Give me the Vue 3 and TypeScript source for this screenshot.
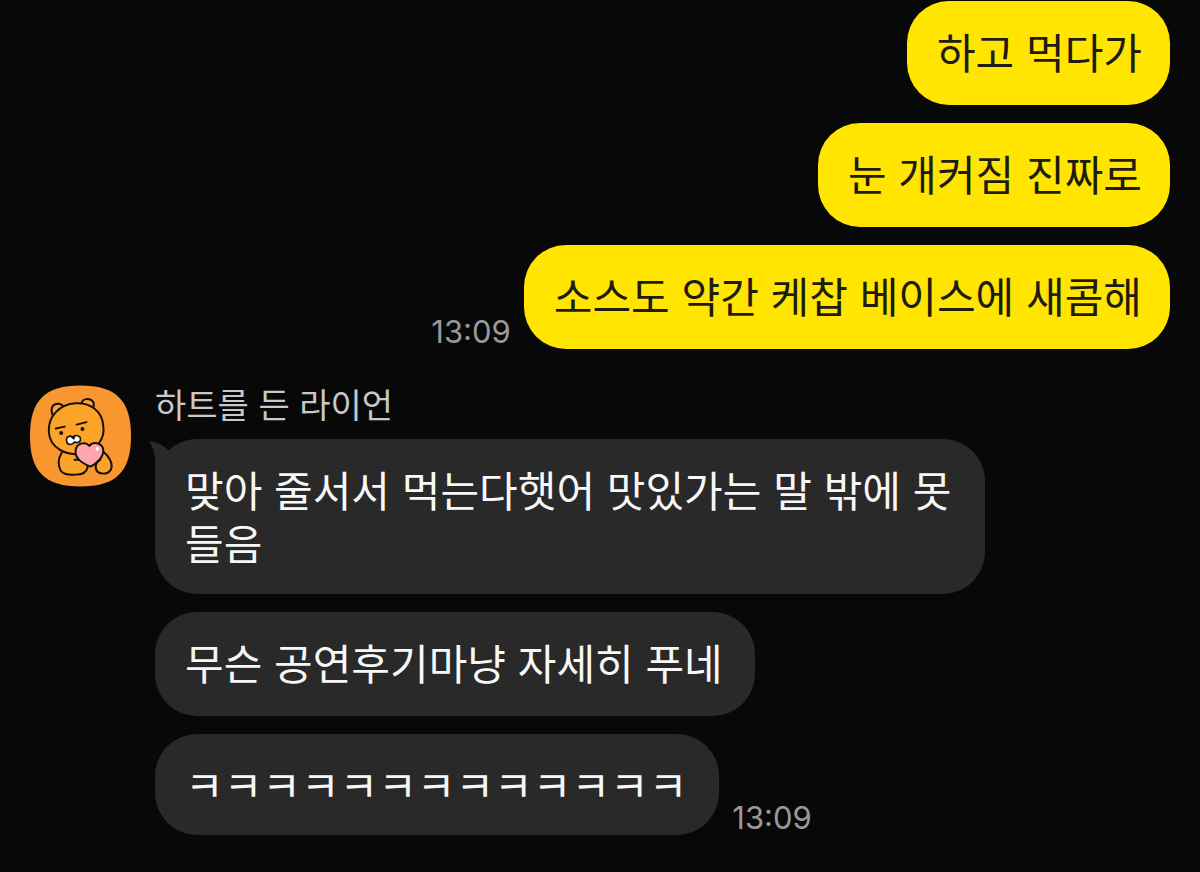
<script setup lang="ts">
interface Message {
  id: number
  text: string
  time?: string
  tail?: boolean
  compact?: boolean
}

const sent: Message[] = [
  { id: 1, text: '하고 먹다가' },
  { id: 2, text: '눈 개커짐 진짜로' },
  { id: 3, text: '소스도 약간 케찹 베이스에 새콤해', time: '13:09' },
]

const sender = '하트를 든 라이언'

const received: Message[] = [
  { id: 4, text: '맞아 줄서서 먹는다햇어 맛있가는 말 밖에 못 들음', tail: true },
  { id: 5, text: '무슨 공연후기마냥 자세히 푸네' },
  { id: 6, text: 'ㅋㅋㅋㅋㅋㅋㅋㅋㅋㅋㅋㅋㅋ', time: '13:09', compact: true },
]
</script>

<template>
  <main class="chat">
    <section class="group sent">
      <div v-for="m in sent" :key="m.id" class="row">
        <time v-if="m.time" class="time">{{ m.time }}</time>
        <p class="bubble">{{ m.text }}</p>
      </div>
    </section>

    <section class="thread">
      <svg class="avatar" viewBox="0 0 102 102" aria-hidden="true">
        <path
          d="M51 0C87 0 102 15 102 51S87 102 51 102 0 87 0 51 15 0 51 0Z"
          fill="#f8962f"
        />
        <g stroke="#17100a" stroke-width="2" stroke-linecap="round" stroke-linejoin="round">
          <path d="M32 68C29 73 28 80 31 86C34 90 40 90.5 46 90C52 90 57 88 58 83C58.500 79 56 76 52 75L60 68L74 67C79 71 84 78 82 84C80 90 72 90 68 87C65 83 66 77 71 75" fill="#fca428" />
          <path d="M23 30C20 23 23 18.500 28 18.500C31 18.500 33 20 34 22" fill="#fca428" />
          <path d="M52 18C53 13 61 12 64 17C65 19 64 22 63 24" fill="#fca428" />
          <path d="M46 18C61 17 73 26 74 41C76 54 67 65 53 68.500C37 72 20 63 19 47C18 31 30 19 46 18Z" fill="#fca428" />
          <path d="M26 43.500L35 41.500M47 39.500L57 37" fill="none" />
          <path d="M45 75L52 75" fill="none" />
          <path d="M43 52C46 49 51 51 51 54C51 58 47 58 45 57C43 61 37 60 37 56C36 52 40 50 43 52Z" fill="#fff" stroke-width="1.600" />
          <path d="M61 82C52 78 46 74 46 67C46 58 56 56 60 61C64 56 74 58 74 66C74 73 67 79 61 82Z" fill="#fda6ad" />
        </g>
        <circle cx="31.500" cy="48" r="2" fill="#17100a" />
        <circle cx="53" cy="44" r="2" fill="#17100a" />
        <path d="M41 52L46 51L44.500 55Z" fill="#17100a" />
        <circle cx="68" cy="64" r="1.800" fill="#fff" />
      </svg>

      <div class="group received">
        <h2 class="name">{{ sender }}</h2>
        <div v-for="m in received" :key="m.id" class="row">
          <p class="bubble" :class="{ compact: m.compact }">
            <svg v-if="m.tail" class="tail" viewBox="0 0 30 44" aria-hidden="true">
              <path d="M0 2C8 3 14 6 19 11L30 11V44H6V22C6 15 4 8 0 2Z" fill="#292929" />
            </svg>
            <span class="text">{{ m.text }}</span>
          </p>
          <time v-if="m.time" class="time">{{ m.time }}</time>
        </div>
      </div>
    </section>
  </main>
</template>

<style>
body {
  margin: 0;
  background: #080808;
}
</style>

<style scoped>
.chat {
  display: flex;
  flex-direction: column;
  gap: 36px;
  padding: 1px 30px 36px;
  font-family: Inter, 'Noto Sans CJK KR', sans-serif;
  font-weight: 400;
}

.group {
  display: flex;
  flex-direction: column;
  gap: 18px;
  min-width: 0;
}

.row {
  display: flex;
  align-items: flex-end;
  gap: 13px;
}

.sent .row {
  justify-content: flex-end;
}

.bubble {
  position: relative;
  box-sizing: border-box;
  max-width: 830px;
  min-height: 104px;
  margin: 0;
  padding: 26px 32px 23px 30px;
  border-radius: 42px;
  font-size: 42px;
  line-height: 53px;
  word-break: keep-all;
}

.sent .bubble {
  padding-right: 28px;
  background: #ffe500;
  color: #1e1b10;
}

.received .bubble {
  background: #292929;
  color: #f7f7f7;
}

.received .bubble.compact {
  min-height: 0;
  padding-bottom: 22px;
}

.tail {
  position: absolute;
  top: 0;
  left: -6px;
  width: 30px;
  height: 44px;
}

.text {
  position: relative;
}

.time {
  color: #999;
  font-size: 31px;
  line-height: 34px;
}

.thread {
  display: flex;
  align-items: flex-start;
  gap: 24px;
}

.avatar {
  flex: none;
  width: 101px;
  height: 102px;
}

.received {
  flex: 1;
}

.name {
  margin: 0 0 -6px;
  color: #c8c8c8;
  font-size: 34px;
  font-weight: 400;
  line-height: 42px;
}
</style>
